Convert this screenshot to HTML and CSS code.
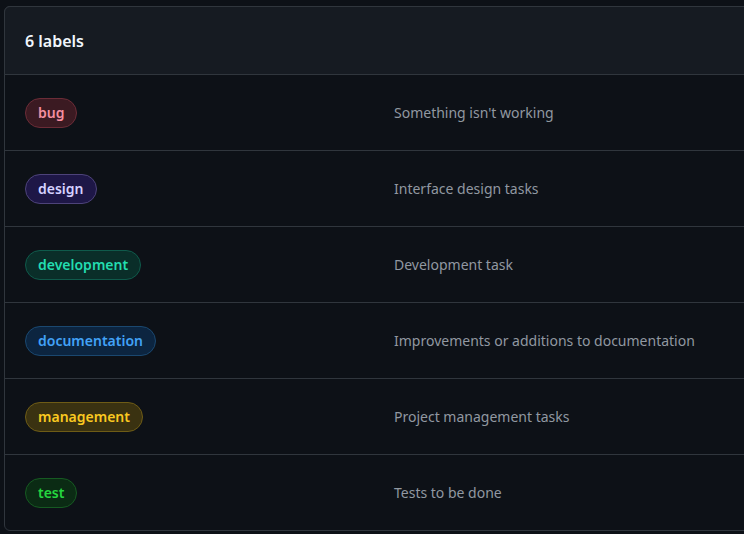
FILE: index.html
```html
<!DOCTYPE html>
<html lang="en">
<head>
<meta charset="utf-8">
<title>Labels</title>
<link rel="stylesheet" href="styles.css">
</head>
<body>
<div class="box">
  <div class="box-header">
    <h2 class="count">6 labels</h2>
  </div>
  <ul class="list">
    <li class="row"><div class="cell"><span class="label label-bug">bug</span></div><div class="desc">Something isn't working</div></li>
    <li class="row"><div class="cell"><span class="label label-design">design</span></div><div class="desc">Interface design tasks</div></li>
    <li class="row"><div class="cell"><span class="label label-development">development</span></div><div class="desc">Development task</div></li>
    <li class="row"><div class="cell"><span class="label label-documentation">documentation</span></div><div class="desc">Improvements or additions to documentation</div></li>
    <li class="row"><div class="cell"><span class="label label-management">management</span></div><div class="desc">Project management tasks</div></li>
    <li class="row"><div class="cell"><span class="label label-test">test</span></div><div class="desc">Tests to be done</div></li>
  </ul>
</div>
</body>
</html>
```

FILE: styles.css
```css
html, body {
  margin: 0;
  background: #0d1117;
  overflow: hidden;
}
body {
  padding: 6px 0 0 4px;
  font-family: "Noto Sans", "Open Sans", sans-serif;
  color: #e6edf3;
}
.box {
  width: 820px;
  border: 1px solid #30363d;
  border-radius: 6px;
  background: #0d1117;
}
.box-header {
  margin: -1px -1px 0 -1px;
  height: 67px;
  display: flex;
  align-items: center;
  padding-left: 20px;
  background: #161b22;
  border: 1px solid #30363d;
  border-radius: 6px 6px 0 0;
}
.count {
  margin: 0;
  font-size: 16px;
  font-weight: 600;
  color: #f0f6fc;
}
.list {
  list-style: none;
  margin: 0;
  padding: 0;
}
.row {
  display: grid;
  grid-template-columns: 369px 1fr;
  align-items: center;
  height: 75px;
  padding-left: 20px;
  border-bottom: 1px solid #30363d;
}
.row:last-child {
  border-bottom: 0;
}
.label {
  display: inline-flex;
  align-items: center;
  height: 28px;
  padding: 0 12px;
  border-radius: 2em;
  border: 1px solid;
  font-size: 14px;
  font-weight: 600;
  line-height: 1;
}
.desc {
  font-size: 14px;
  color: #9198a1;
}
.label-bug { background: #3b1a22; border-color: #6b2c37; color: #f58fa0; }
.label-design { background: #1e1747; border-color: #4d437a; color: #d6d2ff; }
.label-development { background: #0a2e29; border-color: #0f5a4b; color: #22ddb0; }
.label-documentation { background: #0c2540; border-color: #1a4870; color: #42a2f7; }
.label-management { background: #3a3211; border-color: #6e5c16; color: #fac920; }
.label-test { background: #0b2b14; border-color: #165a22; color: #25d63f; }
```
